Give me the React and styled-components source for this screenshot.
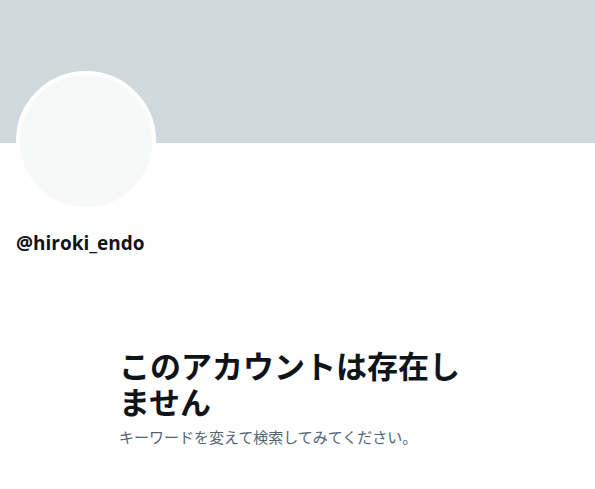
import React from "react";
import styled, { createGlobalStyle } from "styled-components";

const Global = createGlobalStyle`
  html, body { margin: 0; padding: 0; background: #ffffff; }
  body { font-family: "Open Sans", "Noto Sans CJK JP", sans-serif; }
`;

const Page = styled.div`
  width: 595px;
  min-height: 489px;
  background: #ffffff;
  display: flex;
  flex-direction: column;
`;

const Banner = styled.div`
  height: 143px;
  background: #cfd9de;
`;

const ProfileHead = styled.div`
  padding: 0 16px;
  display: flex;
  flex-direction: column;
`;

const Avatar = styled.div`
  width: 132px;
  height: 132px;
  margin-top: -72px;
  border: 4px solid #ffffff;
  border-radius: 50%;
  background: #f7f9f9;
`;

const Handle = styled.div`
  margin-top: 20px;
  font-family: "Open Sans", sans-serif;
  font-weight: 700;
  font-size: 19px;
  line-height: 24px;
  color: #0f1419;
`;

const Empty = styled.div`
  margin: 92px 0 0 119px;
  width: 350px;
  display: flex;
  flex-direction: column;
`;

const Title = styled.h1`
  margin: 0;
  font-family: "Noto Sans CJK JP", sans-serif;
  font-weight: 700;
  font-size: 31px;
  line-height: 36px;
  color: #0f1419;
`;

const Sub = styled.p`
  margin: 8px 0 0;
  font-family: "Noto Sans CJK JP", sans-serif;
  font-size: 15px;
  line-height: 20px;
  color: #536471;
`;

export default function App() {
  return (
    <>
      <Global />
      <Page>
        <Banner />
        <ProfileHead>
          <Avatar />
          <Handle>@hiroki_endo</Handle>
        </ProfileHead>
        <Empty>
          <Title>このアカウントは存在しません</Title>
          <Sub>キーワードを変えて検索してみてください。</Sub>
        </Empty>
      </Page>
    </>
  );
}
